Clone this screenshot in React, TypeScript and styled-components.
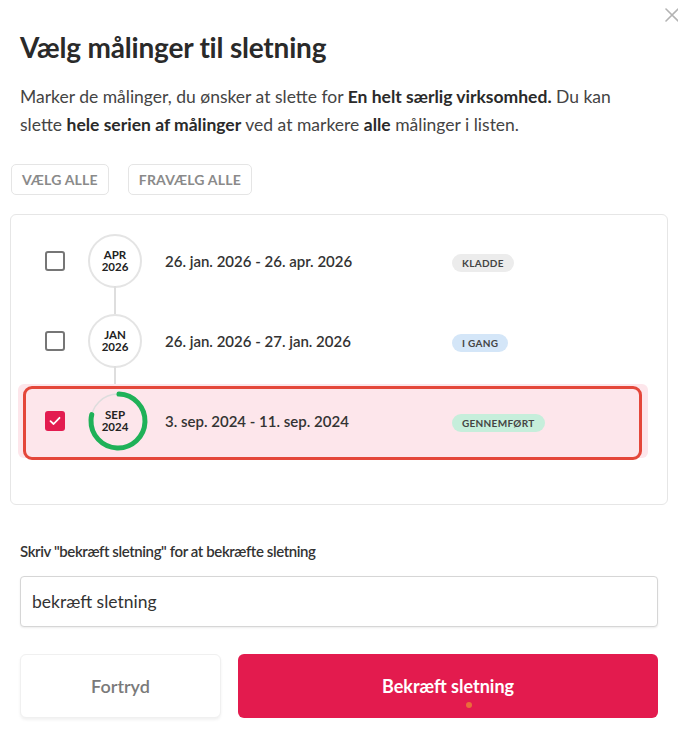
import styled, { createGlobalStyle } from 'styled-components';

const GlobalStyle = createGlobalStyle`
  * { box-sizing: border-box; }
  body {
    margin: 0;
    background: #ffffff;
    font-family: Lato, "Noto Sans", sans-serif;
    color: #333333;
  }
`;

type Status = 'draft' | 'active' | 'done';

interface Measurement {
  id: number;
  month: string;
  year: string;
  range: string;
  status: Status;
  label: string;
  selected: boolean;
  progress?: number;
}

const measurements: Measurement[] = [
  { id: 1, month: 'APR', year: '2026', range: '26. jan. 2026 - 26. apr. 2026', status: 'draft', label: 'KLADDE', selected: false },
  { id: 2, month: 'JAN', year: '2026', range: '26. jan. 2026 - 27. jan. 2026', status: 'active', label: 'I GANG', selected: false },
  { id: 3, month: 'SEP', year: '2024', range: '3. sep. 2024 - 11. sep. 2024', status: 'done', label: 'GENNEMFØRT', selected: true, progress: 0.78 },
];

const badgeColors: Record<Status, string> = {
  draft: '#ececec',
  active: '#d4e6f8',
  done: '#c6eedb',
};

const App = () => {
  return (
    <>
      <GlobalStyle />
      <Dialog>
        <CloseButton aria-label="Luk">
          <svg width="14" height="14" viewBox="0 0 14 14">
            <path d="M1 1 L13 13 M13 1 L1 13" stroke="#b3b3b3" strokeWidth="1.6" strokeLinecap="round" />
          </svg>
        </CloseButton>
        <Title>Vælg målinger til sletning</Title>
        <Intro>
          Marker de målinger, du ønsker at slette for <b>En helt særlig virksomhed.</b> Du kan
          slette <b>hele serien af målinger</b> ved at markere <b>alle</b> målinger i listen.
        </Intro>
        <Toolbar>
          <GhostButton>VÆLG ALLE</GhostButton>
          <GhostButton>FRAVÆLG ALLE</GhostButton>
        </Toolbar>
        <ListCard>
          {measurements.map((m, i) => (
            <Row key={m.id} $selected={m.selected}>
              <Checkbox $checked={m.selected}>
                {m.selected && (
                  <svg width="12" height="10" viewBox="0 0 12 10">
                    <path d="M1.5 5.2 L4.6 8 L10.5 1.8" fill="none" stroke="#fff" strokeWidth="1.8" strokeLinecap="round" strokeLinejoin="round" />
                  </svg>
                )}
              </Checkbox>
              <TimelineCell>
                {m.progress !== undefined ? (
                  <RingBadge>
                    <svg width="62" height="62" viewBox="0 0 62 62">
                      <circle cx="31" cy="31" r="27" fill="none" stroke="#dddddd" strokeWidth="1.5" />
                      <circle
                        cx="31"
                        cy="31"
                        r="27"
                        fill="none"
                        stroke="#1fb158"
                        strokeWidth="5"
                        strokeLinecap="round"
                        strokeDasharray={`${2 * Math.PI * 27 * m.progress} ${2 * Math.PI * 27}`}
                        transform="rotate(-88 31 31)"
                      />
                    </svg>
                    <DateStack>
                      <span>{m.month}</span>
                      <span>{m.year}</span>
                    </DateStack>
                  </RingBadge>
                ) : (
                  <MonthBadge $connect={i < measurements.length - 1}>
                    <DateStack>
                      <span>{m.month}</span>
                      <span>{m.year}</span>
                    </DateStack>
                  </MonthBadge>
                )}
              </TimelineCell>
              <RangeText>{m.range}</RangeText>
              <StatusPill $bg={badgeColors[m.status]}>{m.label}</StatusPill>
            </Row>
          ))}
        </ListCard>
        <Field>
          <FieldLabel htmlFor="confirm">Skriv "bekræft sletning" for at bekræfte sletning</FieldLabel>
          <TextInput id="confirm" defaultValue="bekræft sletning" />
        </Field>
        <Actions>
          <CancelButton>Fortryd</CancelButton>
          <ConfirmButton>
            Bekræft sletning
            <LoadingDot />
          </ConfirmButton>
        </Actions>
      </Dialog>
    </>
  );
};

export default App;

const Dialog = styled.div`
  position: relative;
  width: 678px;
  height: 742px;
  padding: 32px 10px 0 10px;
`;

const CloseButton = styled.button`
  position: absolute;
  top: 8px;
  right: -1px;
  width: 14px;
  height: 14px;
  padding: 0;
  border: none;
  background: transparent;
  display: flex;
`;

const Title = styled.h2`
  margin: 0 10px;
  font-size: 28px;
  line-height: 31px;
  font-weight: 700;
  color: #2a2a2a;
  letter-spacing: -0.2px;
`;

const Intro = styled.p`
  margin: 20px 10px 0;
  max-width: 625px;
  font-size: 17.5px;
  line-height: 28px;
  color: #444444;

  b {
    font-weight: 700;
    color: #2a2a2a;
  }
`;

const Toolbar = styled.div`
  display: flex;
  gap: 19px;
  margin-top: 25px;
  padding-left: 1px;
`;

const GhostButton = styled.button`
  height: 31px;
  padding: 0 10px;
  border: 1px solid #e5e5e5;
  border-radius: 5px;
  background: #ffffff;
  font-family: Lato, "Noto Sans", sans-serif;
  font-size: 14px;
  font-weight: 700;
  letter-spacing: 0.2px;
  color: #8a8a8a;
`;

const ListCard = styled.div`
  margin-top: 19px;
  height: 291px;
  border: 1px solid #e6e6e6;
  border-radius: 6px;
  padding: 9px 19px 0 7px;
  display: flex;
  flex-direction: column;
  gap: 6px;
`;

const Row = styled.div<{ $selected: boolean }>`
  position: relative;
  height: 74px;
  display: grid;
  grid-template-columns: 20px 56px 265px auto;
  column-gap: 22px;
  align-items: center;
  padding-left: 27px;
  border-radius: 6px;
  background: ${(p) => (p.$selected ? '#fde6eb' : 'transparent')};

  ${(p) =>
    p.$selected &&
    `
    &::after {
      content: '';
      position: absolute;
      top: 2px;
      left: 5px;
      right: 6px;
      bottom: -2px;
      border: 3px solid #e4473a;
      border-radius: 9px;
      pointer-events: none;
    }
  `}
`;

const Checkbox = styled.span<{ $checked: boolean }>`
  width: 20px;
  height: 20px;
  border-radius: 3px;
  display: flex;
  align-items: center;
  justify-content: center;
  border: ${(p) => (p.$checked ? 'none' : '2px solid #767676')};
  background: ${(p) => (p.$checked ? '#e31c50' : '#ffffff')};
`;

const TimelineCell = styled.div`
  display: flex;
  justify-content: center;
`;

const MonthBadge = styled.div<{ $connect: boolean }>`
  position: relative;
  width: 54px;
  height: 54px;
  border-radius: 50%;
  border: 2px solid #e4e4e4;
  background: #ffffff;
  display: flex;
  align-items: center;
  justify-content: center;

  ${(p) =>
    p.$connect &&
    `
    &::after {
      content: '';
      position: absolute;
      top: 100%;
      left: 50%;
      width: 2px;
      height: 28px;
      margin-left: -1px;
      background: #dedede;
    }
  `}
`;

const RingBadge = styled.div`
  position: relative;
  width: 62px;
  height: 62px;
  display: flex;
  align-items: center;
  justify-content: center;

  svg {
    position: absolute;
    inset: 0;
  }
`;

const DateStack = styled.div`
  position: relative;
  display: flex;
  flex-direction: column;
  align-items: center;
  font-size: 11.5px;
  line-height: 12px;
  font-weight: 700;
  color: #222222;
`;

const RangeText = styled.div`
  font-size: 15px;
  font-weight: 600;
  color: #333333;
`;

const StatusPill = styled.span<{ $bg: string }>`
  justify-self: start;
  height: 18px;
  padding: 0 10px;
  border-radius: 9px;
  display: inline-flex;
  align-items: center;
  margin-top: 4px;
  background: ${(p) => p.$bg};
  font-size: 10px;
  font-weight: 700;
  letter-spacing: 0.3px;
  color: #444444;
`;

const Field = styled.div`
  margin: 36px 10px 0;
  display: flex;
  flex-direction: column;
  gap: 15px;
`;

const FieldLabel = styled.label`
  font-size: 15px;
  line-height: 20px;
  font-weight: 600;
  letter-spacing: -0.4px;
  color: #333333;
`;

const TextInput = styled.input`
  height: 51px;
  width: 100%;
  padding: 0 11px;
  border: 1px solid #d6d6d6;
  border-radius: 4px;
  box-shadow: 0 1px 2px rgba(0, 0, 0, 0.08);
  font-family: Lato, "Noto Sans", sans-serif;
  font-size: 17.5px;
  color: #333333;
  outline: none;
`;

const Actions = styled.div`
  margin: 27px 10px 0;
  display: grid;
  grid-template-columns: 201px 1fr;
  gap: 17px;
`;

const CancelButton = styled.button`
  height: 64px;
  border: 1px solid #f0f0f0;
  border-radius: 6px;
  background: #ffffff;
  box-shadow: 0 2px 3px rgba(0, 0, 0, 0.06);
  font-family: Lato, "Noto Sans", sans-serif;
  font-size: 18px;
  font-weight: 600;
  color: #7a7a7a;
`;

const ConfirmButton = styled.button`
  position: relative;
  height: 64px;
  border: none;
  border-radius: 6px;
  background: #e31b4e;
  font-family: Lato, "Noto Sans", sans-serif;
  font-size: 18px;
  font-weight: 700;
  color: #ffffff;
`;

const LoadingDot = styled.span`
  position: absolute;
  left: 228px;
  bottom: 10px;
  width: 6px;
  height: 6px;
  border-radius: 50%;
  background: #ea6d3a;
`;
